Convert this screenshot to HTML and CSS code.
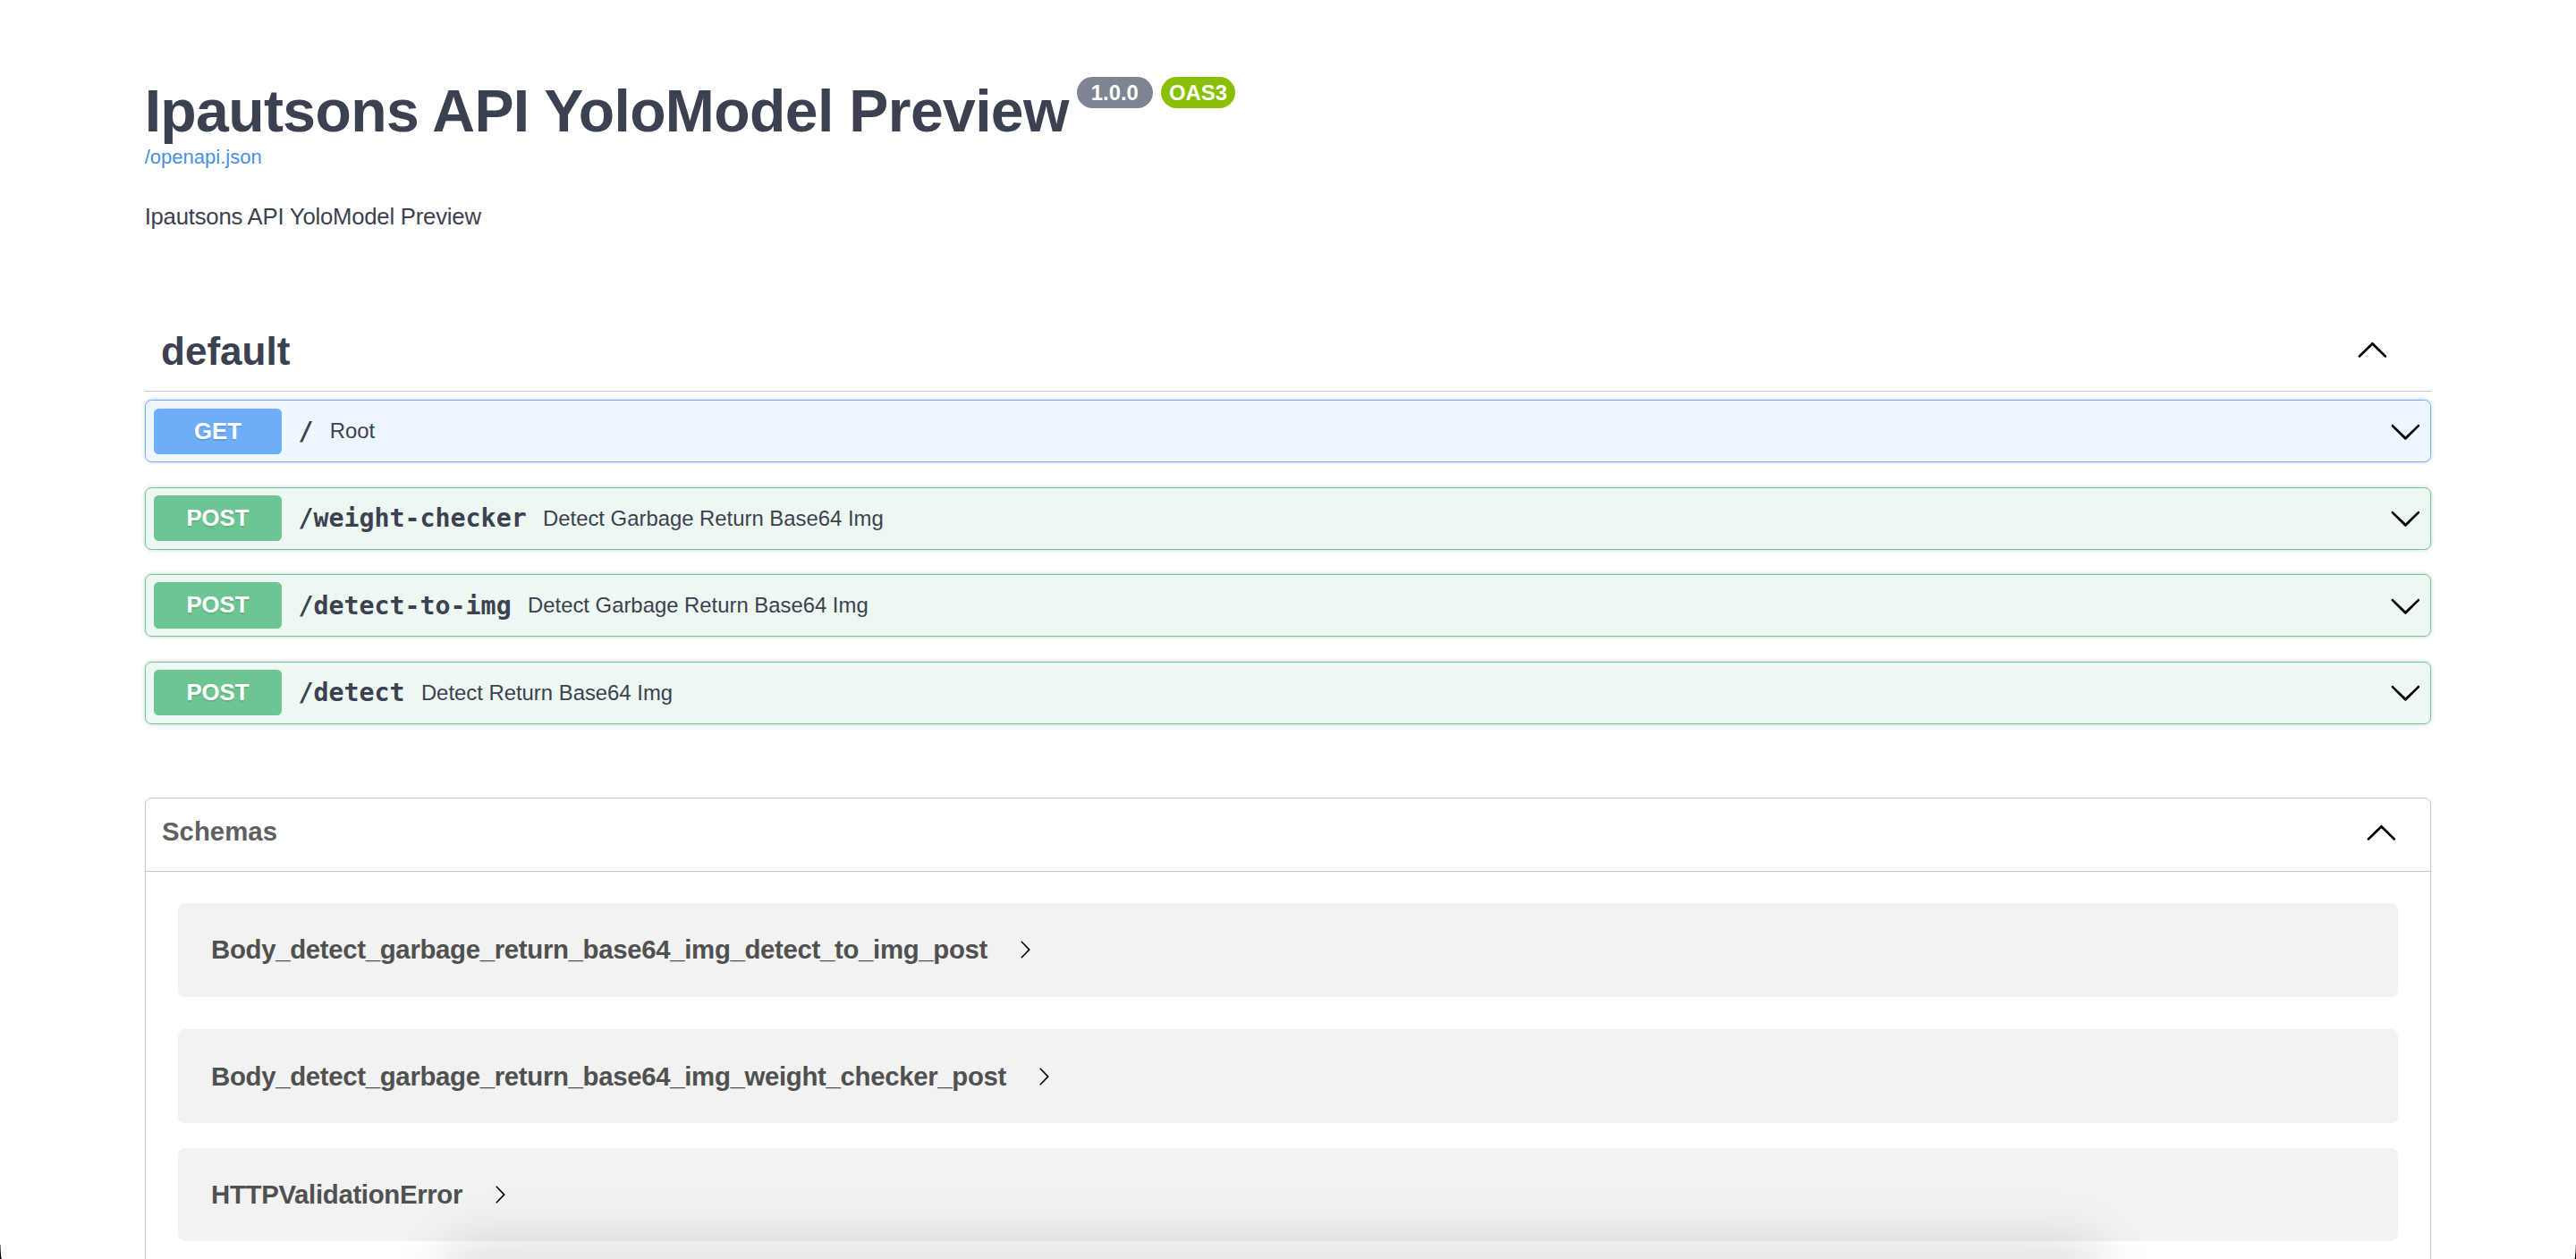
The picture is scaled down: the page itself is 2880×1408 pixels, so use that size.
FILE: index.html
```html
<!DOCTYPE html>
<html lang="en">
<head>
<meta charset="utf-8">
<title>Ipautsons API YoloModel Preview - Swagger UI</title>
<link rel="stylesheet" href="styles.css">
</head>
<body>
<div class="page">
  <div class="wrapper">
    <section class="info">
      <hgroup class="main">
        <h2 class="title">Ipautsons API YoloModel Preview<span class="badge version"> 1.0.0 </span><span class="badge oas">OAS3</span></h2>
        <a class="spec-link" href="#">/openapi.json</a>
      </hgroup>
      <p class="description">Ipautsons API YoloModel Preview</p>
    </section>

    <section class="tag-section">
      <h3 class="opblock-tag">
        <span class="tag-name">default</span>
        <span class="expand">
          <svg class="chev" viewBox="0 0 20 20" width="20" height="20"><path d="M17.418 14.908c.272.268.709.268.979 0s.271-.701 0-.969l-7.908-7.83c-.27-.268-.707-.268-.979 0l-7.908 7.83c-.27.268-.27.701 0 .969.271.268.709.268.979 0L10 7.756l7.418 7.152z"/></svg>
        </span>
      </h3>

      <div class="opblock get">
        <div class="summary">
          <span class="method">GET</span>
          <span class="path">/</span>
          <span class="desc">Root</span>
          <svg class="chev" viewBox="0 0 20 20" width="20" height="20"><path d="M17.418 6.109c.272-.268.709-.268.979 0s.271.701 0 .969l-7.908 7.83c-.27.268-.707.268-.979 0l-7.908-7.83c-.27-.268-.27-.701 0-.969.271-.268.709-.268.979 0L10 13.25l7.418-7.141z"/></svg>
        </div>
      </div>

      <div class="opblock post">
        <div class="summary">
          <span class="method">POST</span>
          <span class="path">/weight-checker</span>
          <span class="desc">Detect Garbage Return Base64 Img</span>
          <svg class="chev" viewBox="0 0 20 20" width="20" height="20"><path d="M17.418 6.109c.272-.268.709-.268.979 0s.271.701 0 .969l-7.908 7.83c-.27.268-.707.268-.979 0l-7.908-7.83c-.27-.268-.27-.701 0-.969.271-.268.709-.268.979 0L10 13.25l7.418-7.141z"/></svg>
        </div>
      </div>

      <div class="opblock post">
        <div class="summary">
          <span class="method">POST</span>
          <span class="path">/detect-to-img</span>
          <span class="desc">Detect Garbage Return Base64 Img</span>
          <svg class="chev" viewBox="0 0 20 20" width="20" height="20"><path d="M17.418 6.109c.272-.268.709-.268.979 0s.271.701 0 .969l-7.908 7.83c-.27.268-.707.268-.979 0l-7.908-7.83c-.27-.268-.27-.701 0-.969.271-.268.709-.268.979 0L10 13.25l7.418-7.141z"/></svg>
        </div>
      </div>

      <div class="opblock post">
        <div class="summary">
          <span class="method">POST</span>
          <span class="path">/detect</span>
          <span class="desc">Detect Return Base64 Img</span>
          <svg class="chev" viewBox="0 0 20 20" width="20" height="20"><path d="M17.418 6.109c.272-.268.709-.268.979 0s.271.701 0 .969l-7.908 7.83c-.27.268-.707.268-.979 0l-7.908-7.83c-.27-.268-.27-.701 0-.969.271-.268.709-.268.979 0L10 13.25l7.418-7.141z"/></svg>
        </div>
      </div>
    </section>

    <section class="models">
      <h4 class="models-head">
        <span class="models-title">Schemas</span>
        <svg class="chev" viewBox="0 0 20 20" width="20" height="20"><path d="M17.418 14.908c.272.268.709.268.979 0s.271-.701 0-.969l-7.908-7.83c-.27-.268-.707-.268-.979 0l-7.908 7.830c-.27.268-.27.701 0 .969.271.268.709.268.979 0L10 7.756l7.418 7.152z"/></svg>
      </h4>
      <div class="model-list">
        <div class="model-container">
          <span class="model-title">Body_detect_garbage_return_base64_img_detect_to_img_post</span>
          <svg class="toggle" viewBox="0 0 20 20" width="12" height="12"><path d="M6.109 2.582c-.268-.272-.268-.709 0-.979s.701-.271.969 0l7.83 7.908c.268.27.268.707 0 .979l-7.83 7.908c-.268.27-.701.27-.969 0-.268-.271-.268-.709 0-.979L13.25 10 6.109 2.582z"/></svg>
        </div>
        <div class="model-container">
          <span class="model-title">Body_detect_garbage_return_base64_img_weight_checker_post</span>
          <svg class="toggle" viewBox="0 0 20 20" width="12" height="12"><path d="M6.109 2.582c-.268-.272-.268-.709 0-.979s.701-.271.969 0l7.83 7.908c.268.27.268.707 0 .979l-7.83 7.908c-.268.27-.701.27-.969 0-.268-.271-.268-.709 0-.979L13.25 10 6.109 2.582z"/></svg>
        </div>
        <div class="model-container">
          <span class="model-title">HTTPValidationError</span>
          <svg class="toggle" viewBox="0 0 20 20" width="12" height="12"><path d="M6.109 2.582c-.268-.272-.268-.709 0-.979s.701-.271.969 0l7.83 7.908c.268.27.268.707 0 .979l-7.83 7.908c-.268.27-.701.27-.969 0-.268-.271-.268-.709 0-.979L13.25 10 6.109 2.582z"/></svg>
        </div>
      </div>
    </section>
  </div>
  <div class="shade"></div>
  <div class="corner corner-left"></div>
  <div class="corner corner-right"></div>
</div>
</body>
</html>
```

FILE: styles.css
```css
* {
  box-sizing: border-box;
}

html,
body {
  margin: 0;
  padding: 0;
  background: #ffffff;
  overflow: hidden;
}

body {
  font-family: "Liberation Sans", Arial, Helvetica, sans-serif;
  color: #3b4151;
}

.page {
  zoom: 1.836735;
  position: relative;
  width: 1568px;
  height: 767px;
  overflow: hidden;
  background: #ffffff;
}

.wrapper {
  margin: 0 88px;
}

/* ---------- info ---------- */
.info {
  padding-top: 47px;
  margin: 0 0 50px;
}

.main {
  margin: 0 0 21px;
}

.title {
  margin: 0;
  font-size: 36px;
  font-weight: bold;
  line-height: 42px;
  color: #3b4151;
  letter-spacing: -0.35px;
}

.badge {
  display: inline-block;
  vertical-align: top;
  margin-left: 5px;
  padding: 2px 5px;
  border-radius: 57px;
  font-size: 13px;
  line-height: 15px;
  font-weight: bold;
  letter-spacing: 0;
  white-space: pre;
  color: #ffffff;
  background: #7d8492;
}

.badge.oas {
  background: #89bf04;
}

.spec-link {
  display: block;
  font-size: 12px;
  line-height: 14px;
  color: #4990e2;
  text-decoration: none;
}

.description {
  margin: 0;
  font-size: 14px;
  line-height: 16px;
  letter-spacing: -0.12px;
  color: #3b4151;
}

/* ---------- tag section ---------- */
.tag-section {
  display: flex;
  flex-direction: column;
}

.opblock-tag {
  display: flex;
  align-items: center;
  margin: 0 0 5px;
  padding: 10px 20px 10px 10px;
  border-bottom: 1px solid rgba(59, 65, 81, 0.3);
  font-size: 24px;
  line-height: 28px;
  font-weight: bold;
  color: #3b4151;
}

.tag-name {
  flex: 1;
}

.expand {
  display: flex;
  padding: 0 6px 3px;
}

.chev {
  display: block;
  flex: none;
  fill: #000000;
}

.opblock {
  margin: 0 0 15px;
  border: 1px solid #000;
  border-radius: 4px;
  box-shadow: 0 0 3px rgba(0, 0, 0, 0.19);
}

.opblock.get {
  border-color: #6daef8;
  background: #eef6ff;
}

.opblock.post {
  border-color: #6cc592;
  background: #eef8f2;
}

.summary {
  display: flex;
  align-items: center;
  padding: 4.5px 5px;
}

.method {
  flex: none;
  width: 78px;
  padding: 6px 0;
  border-radius: 3px;
  font-size: 14px;
  line-height: 16px;
  font-weight: bold;
  text-align: center;
  color: #ffffff;
  text-shadow: 0 1px 0 rgba(0, 0, 0, 0.1);
}

.get .method {
  background: #6daef8;
}

.post .method {
  background: #6cc592;
}

.path {
  flex: none;
  padding: 0 10px;
  font-family: "DejaVu Sans Mono", "Liberation Mono", monospace;
  font-size: 15.4px;
  font-weight: bold;
  color: #3b4151;
}

.desc {
  flex: 1;
  font-size: 13px;
  color: #3b4151;
}

/* ---------- models ---------- */
.models {
  margin: 30px 0;
  border: 1px solid rgba(59, 65, 81, 0.3);
  border-radius: 4px;
}

.models-head {
  display: flex;
  align-items: center;
  margin: 0;
  padding: 10px 20px 14px 10px;
  border-bottom: 1px solid rgba(59, 65, 81, 0.3);
  font-size: 16px;
  line-height: 20px;
  font-weight: bold;
  color: #606060;
}

.models-title {
  flex: 1;
}

.model-list {
  padding: 19px 0 20px;
}

.model-container {
  display: flex;
  align-items: center;
  height: 57px;
  margin: 0 20px 15px;
  padding: 0 20px;
  border-radius: 4px;
  background: rgba(0, 0, 0, 0.05);
}

.model-container:first-child {
  margin-bottom: 20px;
}

.model-title {
  font-size: 16px;
  font-weight: bold;
  letter-spacing: -0.18px;
  color: #505050;
}

.toggle {
  display: block;
  margin-left: 17px;
  fill: #000000;
}

/* ---------- screenshot artifacts ---------- */
.shade {
  position: absolute;
  left: 265px;
  top: 752px;
  width: 1020px;
  height: 60px;
  border-radius: 30px;
  background: rgba(0, 0, 0, 0.1);
  filter: blur(14px);
}

.corner {
  position: absolute;
  bottom: 0;
  width: 60px;
  height: 9px;
}

.corner-left {
  left: 0;
  background: radial-gradient(circle 60px at 60px 0, transparent 59.5px, #000 60px);
}

.corner-right {
  right: 0;
  background: radial-gradient(circle 60px at 0 0, transparent 59.5px, #000 60px);
}
```
